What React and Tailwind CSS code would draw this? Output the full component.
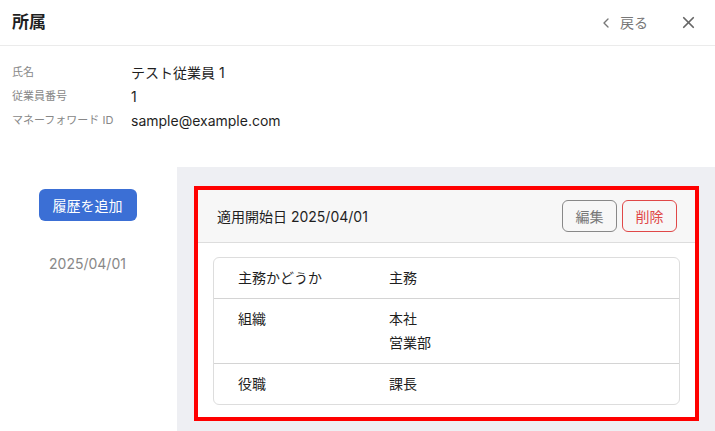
import { ChevronLeft, X } from 'lucide-react';

const info = [
    { label: '氏名', value: 'テスト従業員 1' },
    { label: '従業員番号', value: '1' },
    { label: 'マネーフォワード ID', value: 'sample@example.com' },
];

const rows = [
    { label: '主務かどうか', values: ['主務'] },
    { label: '組織', values: ['本社', '営業部'] },
    { label: '役職', values: ['課長'] },
];

const App = () => {
    return (
        <div
            className="w-[715px] h-[431px] overflow-hidden bg-white text-[#1f1f1f]"
            style={{ fontFamily: 'Inter, "Noto Sans CJK JP", sans-serif' }}
        >
            <div className="h-[46px] flex items-center justify-between pl-3 pr-[17px] border-b border-[#ebebeb]">
                <h1 className="text-[17px] font-bold leading-none">所属</h1>
                <div className="flex items-center">
                    <button className="flex items-center text-[14px] text-[#777] mr-[31px]">
                        <ChevronLeft size={16} strokeWidth={2} className="ml-[2px] mr-[6px]" />
                        戻る
                    </button>
                    <X size={19} strokeWidth={2.2} className="text-[#666]" />
                </div>
            </div>

            <div className="pt-[14px] pl-3 mb-[35px]">
                {info.map((item) => (
                    <div key={item.label} className="flex items-center h-6">
                        <div className="w-[119px] text-[11px] text-[#888]">{item.label}</div>
                        <div className="text-[14px]">{item.value}</div>
                    </div>
                ))}
            </div>

            <div className="flex h-[264px]">
                <div className="w-[177px] flex flex-col items-center pt-[22px] pr-[2px]">
                    <button className="w-[98px] h-[32px] rounded-md bg-[#3b6fd5] text-white text-[14px]">
                        履歴を追加
                    </button>
                    <div className="mt-[32px] text-[14px] text-[#888]">2025/04/01</div>
                </div>

                <div className="flex-1 bg-[#eeeff3] pl-[17px] pt-[19px] pr-[16px]">
                    <div className="border-4 border-[#ff0000] bg-white">
                        <div className="h-[53px] bg-[#f7f7f7] border-b border-[#dddddd] flex items-center justify-between pl-[19px] pr-[18px]">
                            <div className="text-[14px]">適用開始日 2025/04/01</div>
                            <div className="flex gap-[5px]">
                                <button className="w-[55px] h-[32px] rounded-md border border-[#888] text-[14px] text-[#777]">
                                    編集
                                </button>
                                <button className="w-[55px] h-[32px] rounded-md border border-[#e04848] text-[14px] text-[#e04848]">
                                    削除
                                </button>
                            </div>
                        </div>
                        <div className="px-[15px] pt-[14px] pb-[12px]">
                            <div className="border border-[#dddddd] rounded-md">
                                {rows.map((row, i) => (
                                    <div
                                        key={row.label}
                                        className={`flex py-2 pl-6 text-[14px] leading-6 ${i > 0 ? 'border-t border-[#d4d4d4]' : ''}`}
                                    >
                                        <div className="w-[151px]">{row.label}</div>
                                        <div>
                                            {row.values.map((v) => (
                                                <div key={v}>{v}</div>
                                            ))}
                                        </div>
                                    </div>
                                ))}
                            </div>
                        </div>
                    </div>
                </div>
            </div>
        </div>
    );
};

export default App;
